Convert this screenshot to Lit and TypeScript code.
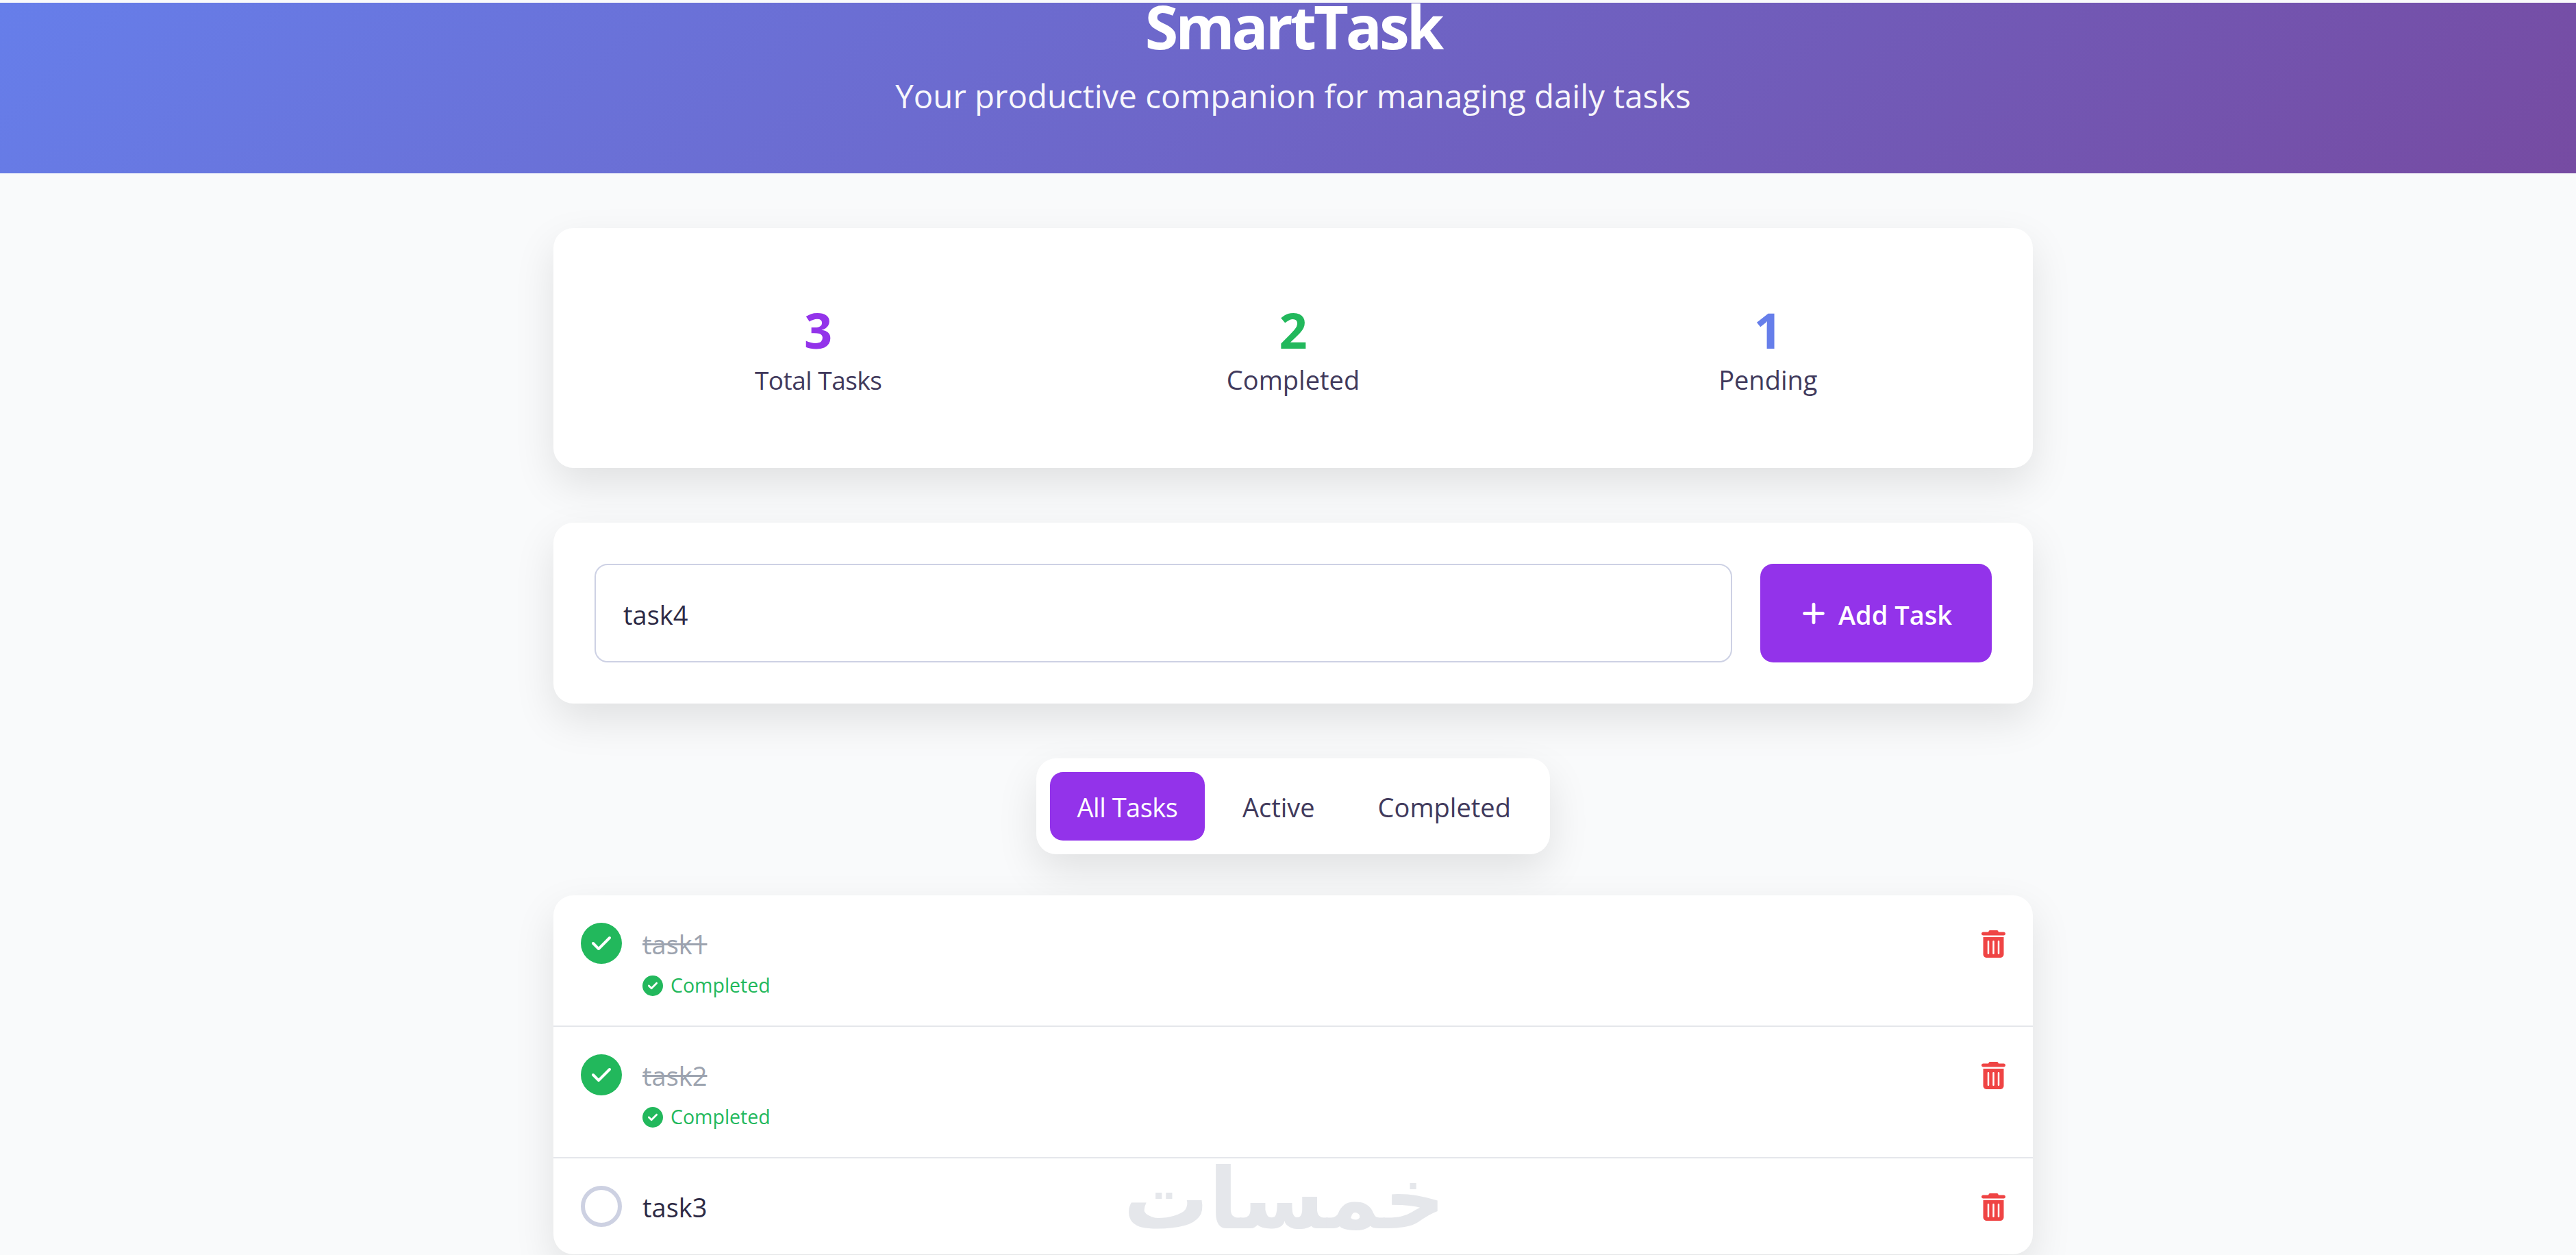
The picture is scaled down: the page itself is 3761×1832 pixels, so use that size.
import { LitElement, css, html, svg } from "lit";
import { customElement, state } from "lit/decorators.js";

const CHECK =
  "M438.6 105.4c12.5 12.5 12.5 32.8 0 45.3l-256 256c-12.5 12.5-32.8 12.5-45.3 0l-128-128c-12.5-12.5-12.5-32.8 0-45.3s32.8-12.5 45.3 0L160 338.7 393.4 105.4c12.5-12.5 32.8-12.5 45.3 0z";
const CIRCLE_CHECK =
  "M256 512A256 256 0 1 0 256 0a256 256 0 1 0 0 512zM369 209L241 337c-9.4 9.4-24.6 9.4-33.9 0l-64-64c-9.4-9.4-9.4-24.6 0-33.9s24.6-9.4 33.9 0l47 47L335 175c9.4-9.4 24.6-9.4 33.9 0s9.4 24.6 0 33.9z";
const PLUS =
  "M256 80c0-17.7-14.3-32-32-32s-32 14.3-32 32V224H48c-17.7 0-32 14.3-32 32s14.3 32 32 32H192V432c0 17.7 14.3 32 32 32s32-14.3 32-32V288H400c17.7 0 32-14.3 32-32s-14.3-32-32-32H256V80z";
const TRASH =
  "M135.2 17.7C140.6 6.8 151.7 0 163.8 0H284.2c12.1 0 23.2 6.8 28.6 17.7L320 32h96c17.7 0 32 14.3 32 32s-14.3 32-32 32H32C14.3 96 0 81.7 0 64S14.3 32 32 32h96l7.2-14.3zM32 128H416V448c0 35.3-28.7 64-64 64H96c-35.3 0-64-28.7-64-64V128zm96 64c-8.8 0-16 7.2-16 16V432c0 8.8 7.2 16 16 16s16-7.2 16-16V208c0-8.8-7.2-16-16-16zm96 0c-8.8 0-16 7.2-16 16V432c0 8.8 7.2 16 16 16s16-7.2 16-16V208c0-8.8-7.2-16-16-16zm96 0c-8.8 0-16 7.2-16 16V432c0 8.8 7.2 16 16 16s16-7.2 16-16V208c0-8.8-7.2-16-16-16z";

const icon = (d: string, box: string, cls: string) =>
  html`<svg class=${cls} viewBox=${box} aria-hidden="true">${svg`<path fill="currentColor" d=${d}></path>`}</svg>`;

interface Task {
  name: string;
  done: boolean;
}

@customElement("app-root")
export class AppRoot extends LitElement {
  @state() private tasks: Task[] = [
    { name: "task1", done: true },
    { name: "task2", done: true },
    { name: "task3", done: false },
  ];

  static styles = css`
    :host {
      display: block;
      position: relative;
      height: 1832px;
      overflow: hidden;
      background: #f9fafb;
      color: #413a5c;
      font-family: "Open Sans", "Noto Sans", sans-serif;
      font-size: 38px;
    }
    /* the captured page is a little wider than the window, so its centre sits right of the middle */
    .page {
      width: 3776px;
      padding-top: 4px;
    }
    header {
      height: 249px;
      overflow: hidden;
      text-align: center;
      color: #fff;
      background: linear-gradient(135deg, #667eea, #764ba2);
    }
    h1 {
      margin: -14px 0 0;
      font-size: 88px;
      line-height: 96px;
      font-weight: 700;
      letter-spacing: -4px;
    }
    .tagline {
      margin: 25px 0 0;
      font-size: 47.4px;
      line-height: 58px;
      opacity: 0.95;
    }
    main {
      width: 2160px;
      margin: 0 auto;
      padding-top: 80px;
    }
    .card {
      background: #fff;
      border-radius: 29px;
      box-shadow: 0 24px 60px rgba(0, 0, 0, 0.1);
    }
    .stats {
      display: grid;
      grid-template-columns: repeat(3, 1fr);
      padding: 110px 40px 100px;
      text-align: center;
    }
    .num {
      font-size: 72px;
      line-height: 76px;
      font-weight: 700;
    }
    .label {
      margin-top: 7px;
      line-height: 57px;
    }
    .label.tight {
      letter-spacing: -0.5px;
      font-size: 37px;
    }
    .purple {
      color: #9333ea;
    }
    .green {
      color: #22b85c;
    }
    .blue {
      color: #667eea;
    }
    .add {
      display: flex;
      gap: 41px;
      margin-top: 80px;
      padding: 60px;
    }
    input {
      flex: 1;
      min-width: 0;
      height: 144px;
      box-sizing: border-box;
      padding: 3px 40px 0;
      border: 2.4px solid #cdd1e4;
      border-radius: 19px;
      outline: none;
      background: #fff;
      color: #2d2a45;
      font: inherit;
    }
    .add-btn {
      display: flex;
      align-items: center;
      justify-content: center;
      gap: 19px;
      width: 338px;
      height: 144px;
      padding: 3px 0 0 3px;
      border: none;
      border-radius: 19px;
      background: #9333ea;
      color: #fff;
      font: inherit;
      font-weight: 600;
    }
    .plus {
      width: 34px;
      height: 39px;
      margin-top: -3px;
    }
    .filters {
      display: flex;
      gap: 17px;
      width: max-content;
      margin: 80px auto 0;
      padding: 20px;
    }
    .filters button {
      height: 100px;
      padding: 2px 37.5px 0;
      border: none;
      border-radius: 19px;
      background: transparent;
      color: inherit;
      font: inherit;
    }
    .filters button.active {
      padding: 2px 40px 0;
      letter-spacing: -0.5px;
      background: #9333ea;
      color: #fff;
    }
    .list {
      margin-top: 60px;
      overflow: hidden;
    }
    .task {
      display: flex;
      align-items: flex-start;
      gap: 30px;
      padding: 40px;
      border-bottom: 2px solid #e5e7eb;
    }
    .task:last-child {
      border-bottom: none;
    }
    .box {
      flex: none;
      display: flex;
      align-items: center;
      justify-content: center;
      width: 60px;
      height: 60px;
      box-sizing: border-box;
      border: 6px solid #cdd1e2;
      border-radius: 50%;
      color: #fff;
    }
    .box.done {
      border: none;
      background: #22b85c;
    }
    .tick {
      width: 28px;
      height: 32px;
    }
    .body {
      flex: 1;
    }
    .name {
      padding-top: 3px;
      line-height: 57px;
      color: #2d2a45;
    }
    .done-name {
      color: #9ca3af;
      text-decoration: line-through;
    }
    .status {
      display: flex;
      align-items: center;
      gap: 11px;
      margin-top: 13px;
      line-height: 37px;
      font-size: 28.5px;
      color: #22b85c;
    }
    .status-icon {
      width: 30px;
      height: 30px;
    }
    .del {
      flex: none;
      display: flex;
      margin-top: 11px;
      padding: 0;
      border: none;
      background: none;
      color: #ef4444;
    }
    .trash {
      width: 35px;
      height: 40px;
    }
    .watermark {
      position: absolute;
      left: 1659px;
      top: 1675px;
      width: 451px;
      text-align: center;
      font-family: "DejaVu Sans", sans-serif;
      font-size: 124px;
      line-height: 150px;
      font-weight: 700;
      color: #e5e7eb;
      white-space: nowrap;
    }
  `;

  private renderTask(t: Task) {
    return html`
      <div class="task">
        <div class="box ${t.done ? "done" : ""}">
          ${t.done ? icon(CHECK, "0 0 448 512", "tick") : ""}
        </div>
        <div class="body">
          <div class="name ${t.done ? "done-name" : ""}">${t.name}</div>
          ${t.done
            ? html`<div class="status">
                ${icon(CIRCLE_CHECK, "0 0 512 512", "status-icon")} Completed
              </div>`
            : ""}
        </div>
        <button class="del" aria-label="Delete">
          ${icon(TRASH, "0 0 448 512", "trash")}
        </button>
      </div>
    `;
  }

  render() {
    return html`
      <div class="page">
        <header>
          <h1>SmartTask</h1>
          <p class="tagline">Your productive companion for managing daily tasks</p>
        </header>
        <main>
          <section class="card stats">
            <div><div class="num purple">3</div><div class="label tight">Total Tasks</div></div>
            <div><div class="num green">2</div><div class="label">Completed</div></div>
            <div><div class="num blue">1</div><div class="label">Pending</div></div>
          </section>
          <section class="card add">
            <input .value=${"task4"} placeholder="Add a new task" />
            <button class="add-btn">${icon(PLUS, "0 0 448 512", "plus")} Add Task</button>
          </section>
          <nav class="card filters">
            <button class="active">All Tasks</button>
            <button>Active</button>
            <button>Completed</button>
          </nav>
          <section class="card list">${this.tasks.map((t) => this.renderTask(t))}</section>
        </main>
      </div>
      <div class="watermark" dir="rtl" lang="ar">خمسات</div>
    `;
  }
}
